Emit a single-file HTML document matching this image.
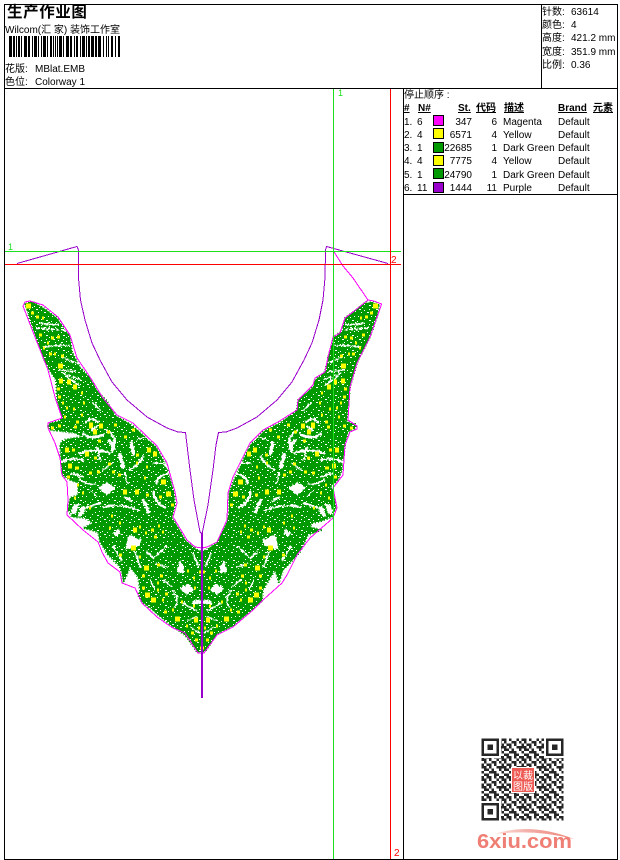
<!DOCTYPE html>
<html lang="zh">
<head>
<meta charset="utf-8">
<title>生产作业图</title>
<style>
html,body{margin:0;padding:0;background:#fff;width:620px;height:860px;overflow:hidden}
svg{display:block}
text{font-family:"Liberation Sans","Noto Sans CJK SC",sans-serif;font-size:10px;fill:#000}
.b{font-weight:bold}
.u{text-decoration:underline}
.r{text-anchor:end}
</style>
</head>
<body>
<svg width="620" height="860" viewBox="0 0 620 860" xmlns="http://www.w3.org/2000/svg">
<defs>
<pattern id="sp" width="17" height="15" patternUnits="userSpaceOnUse">
<path shape-rendering="crispEdges" fill="#fff" d="M1 1h1v1h-1zM10 2h1v1h-1zM14 1h1v1h-1zM7 4h1v1h-1zM12 5h2v1h-2zM0 6h1v1h-1zM5 7h1v1h-1zM15 7h1v1h-1zM2 9h2v1h-2zM12 9h1v1h-1zM7 10h1v1h-1zM4 12h1v1h-1zM10 12h2v1h-2zM15 11h1v1h-1z"/>
</pattern>
<pattern id="qr" width="20" height="20" patternUnits="userSpaceOnUse" x="481.5" y="738.5">
<g transform="scale(2.5)"><path stroke="#262626" stroke-width="1" fill="none" d="M0 .5h2M3 .5h1M6 .5h1M1 1.5h1M4 1.5h2M7 1.5h1M0 2.5h1M2 2.5h2M5 2.5h1M0 3.5h2M3 3.5h1M6 3.5h2M1 4.5h2M4 4.5h1M7 4.5h1M0 5.5h1M3 5.5h3M1 6.5h2M5 6.5h2M0 7.5h1M2 7.5h2M5 7.5h1M7 7.5h1"/></g>
</pattern>
<filter id="bl" x="-5%" y="-5%" width="110%" height="110%"><feGaussianBlur stdDeviation=".3"/></filter>
<filter id="rough" filterUnits="userSpaceOnUse" x="0" y="280" width="404" height="390">
 <feTurbulence type="fractalNoise" baseFrequency=".45" numOctaves="2" seed="7"/>
 <feDisplacementMap in="SourceGraphic" scale="4" xChannelSelector="R" yChannelSelector="G"/>
</filter>
<linearGradient id="sw" x1="0" x2="1" y1="0" y2="0"><stop offset="0" stop-color="#fbdcd8"/><stop offset=".5" stop-color="#f2a8a1"/><stop offset="1" stop-color="#ef8278"/></linearGradient>

<g id="detail">
 <g filter="url(#rough)">
 <g transform="translate(40 420) scale(.33333)" fill="#fff" stroke="#fff" stroke-linecap="round" stroke-linejoin="round">
  <path stroke="none" d="M175 205L200 185L226 205L200 226ZM255 392L265 345L305 360L300 375L272 385ZM420 505L445 490L462 510L440 525ZM218 340L235 325L241 340L225 352ZM410 455L420 420L432 440L430 460ZM90 285L100 255L118 250L108 280ZM125 258L140 262L128 285L112 290Z"/>
  <g fill="none" stroke-width="9">
   <path d="M120 100Q170 82 210 100" stroke-width="7"/>
   <path d="M62 125Q110 110 130 122" stroke-width="6"/>
   <path d="M172 82L180 118" stroke-width="6"/>
   <path d="M240 105L250 140" stroke-width="12"/>
   <path d="M275 70L280 100" stroke-width="11"/>
   <path d="M208 62Q226 80 216 95" stroke-width="10"/>
   <path d="M130 42Q160 62 190 42" stroke-width="8"/>
   <path d="M190 262Q240 248 300 272" stroke-width="5"/>
   <path d="M310 240L325 275" stroke-width="10"/>
   <path d="M340 215Q345 250 375 262" stroke-width="7"/>
   <path d="M350 190Q350 170 385 160" stroke-width="6"/>
   <path d="M255 160L262 190" stroke-width="6"/>
   <path d="M270 150Q300 130 310 110" stroke-width="6"/>
   <path d="M120 180Q160 202 168 190" stroke-width="6"/>
   <path d="M180 250L140 262" stroke-width="6"/>
   <path d="M350 405L380 380" stroke-width="5"/>
   <path d="M340 415L320 395" stroke-width="5"/>
   <path d="M380 442L350 430" stroke-width="5"/>
   <path d="M400 512Q420 540 405 560" stroke-width="5"/>
   <path d="M430 550L470 572" stroke-width="5"/>
   <path d="M460 400L475 440" stroke-width="5"/>
   <path d="M470 545L510 548" stroke-width="10"/>
   <path d="M285 395L300 440" stroke-width="5"/>
   <path d="M220 380L245 420" stroke-width="5"/>
   <path d="M95 160L130 170" stroke-width="5"/>
   <path d="M450 620L480 640" stroke-width="4"/>
   <path d="M340 130Q375 125 385 145" stroke-width="5"/>
   <path d="M190 150L215 130" stroke-width="4"/>
   <path d="M290 60Q315 45 335 65" stroke-width="4"/>
   <path d="M255 230L275 245" stroke-width="5"/>
   <path d="M150 210L170 230" stroke-width="4"/>
   <path d="M370 480L395 500" stroke-width="4"/>
   <path d="M330 480L345 510" stroke-width="4"/>
   <path d="M445 600L470 590" stroke-width="4"/>
  </g>
 </g>
 <g transform="translate(0 230) scale(.33333)" fill="none" stroke="#fff" stroke-linecap="square">
  <path stroke-width="5" stroke-dasharray="8 7" d="M110 295L195 300M120 280L175 285M185 382L238 402M190 430L245 450M180 420L225 425M130 350L205 345"/>
  <path stroke-width="6" d="M280 520L300 540M255 578Q270 558 292 575M320 600Q352 620 342 650M200 440L235 465M290 590L275 600"/>
 </g>
 </g>
 <path fill="none" stroke="#ff0" stroke-width="3" shape-rendering="crispEdges" d="M31 313h3M36 317h3M42 318h2M39 335h3M51 338h3M57 337h3M47 343h2M43 348h2M49 354h3M54 354h2M61 356h3M57 389h3M81 393h2M58 397h3M62 403h2M66 408h2M83 403h2M73 409h2M81 415h2M76 422h3M64 417h2M58 426h3M51 428h3M74 427h3M89 427h3M107 432h3M114 425h3M132 430h3M124 437h3M98 441h3M72 450h3M94 458h3M75 468h4M67 477h3M77 485h2M89 473h3M97 472h3M112 472h3M118 475h3M108 464h3M136 455h3M136 463h2M146 467h2M159 497h3M171 505h3M146 495h3M144 478h2M114 425h3M82 493h2M74 498h2M89 508h2M111 516h2M119 523h2M109 528h2M139 527h2M151 530h3M158 526h2M162 532h2M154 537h3M145 533h2M119 555h3M139 557h2M157 565h3M160 576h3M142 576h3M157 583h2M142 588h3M165 594h3M157 590h2M162 600h2M164 612h3M172 610h2M181 602h2M187 571h2M193 578h2M199 572h2M194 588h2M191 633h3M195 640h3M200 648h2M193 606h2M186 626h2M198 628h2"/>
 <path fill="none" stroke="#ff0" stroke-width="5" shape-rendering="crispEdges" d="M26 306h5M58 366h5M59 381h4M67 382h4M73 387h4M65 450h4M68 466h4M161 482h5M166 494h5M131 548h5M144 568h5M145 595h5M151 600h5M175 619h5M135 492h4M123 492h4M93 432h4M99 426h4M89 425h4M153 454h4M147 450h4M133 530h4M85 454h4M194 620h4"/>
</g>
</defs>

<rect width="620" height="860" fill="#fff"/>

<g shape-rendering="crispEdges">
 <path fill="#090" stroke="#090" stroke-width="2" stroke-dasharray="1 2" d="M25 304L27 302L33 302L45 309L57 318L65 330L70 336L72 352L80 367L90 378L98 392L106 400L116 416L132 425L143 435L156 447L166 465L174 492L175 505L172 517L186 541L196 549L202 552L202 652L197 652L185 635L173 627L157 614L150 608L142 602L138 595L140 590L138 577L130 567L127 575L123 583L122 573L120 567L108 555L100 542L98 532L83 528L93 523L85 518L72 517L68 510L70 498L72 497L78 495L78 483L70 480L62 475L61 460L60 445L63 440L73 438L83 437L75 433L50 430L48 426L50 423L60 421L62 417L57 400L56 380L48 368L46 364L35 335Z"/>
 <path fill="#090" stroke="#090" stroke-width="2" stroke-dasharray="1 2" d="M379 305L372 302L365 303L356 310L345 318L342 330L334 337L328 358L325 372L315 380L313 387L298 400L297 410L280 423L265 430L250 445L235 478L229 493L229 510L227 522L217 543L207 549L202 552L202 652L205 652L217 634L233 626L253 609L262 601L263 590L275 570L279 583L283 570L290 563L300 552L308 535L322 530L310 527L312 523L322 521L332 517L336 508L333 490L330 487L338 480L342 470L345 445L348 432L356 428L355 424L345 421L347 420L350 387L357 363L370 337L377 317Z"/>
 <path fill="url(#sp)" d="M25 304L27 302L33 302L45 309L57 318L65 330L70 336L72 352L80 367L90 378L98 392L106 400L116 416L132 425L143 435L156 447L166 465L174 492L175 505L172 517L186 541L196 549L202 552L202 652L197 652L185 635L173 627L157 614L150 608L142 602L138 595L140 590L138 577L130 567L127 575L123 583L122 573L120 567L108 555L100 542L98 532L83 528L93 523L85 518L72 517L68 510L70 498L72 497L78 495L78 483L70 480L62 475L61 460L60 445L63 440L73 438L83 437L75 433L50 430L48 426L50 423L60 421L62 417L57 400L56 380L48 368L46 364L35 335Z"/>
 <path fill="url(#sp)" d="M379 305L372 302L365 303L356 310L345 318L342 330L334 337L328 358L325 372L315 380L313 387L298 400L297 410L280 423L265 430L250 445L235 478L229 493L229 510L227 522L217 543L207 549L202 552L202 652L205 652L217 634L233 626L253 609L262 601L263 590L275 570L279 583L283 570L290 563L300 552L308 535L322 530L310 527L312 523L322 521L332 517L336 508L333 490L330 487L338 480L342 470L345 445L348 432L356 428L355 424L345 421L347 420L350 387L357 363L370 337L377 317Z"/>
 <use href="#detail"/>
 <use href="#detail" transform="matrix(-1 0 0 1 404 0)"/>

 <path fill="none" stroke="#f0f" stroke-width="1" d="M333.5 251L343 266L353 278L368 300L374 301L381.5 304L380 309L377 317L370 337L357 363L350 387L348 420L357 426L357 429L350 432L345 445L343 475L333 488L337 508L333 518L310 538L297 555L287 575L282 583L263 600L253 610L233 627L217 635L204 653L198 653L185 633L173 628L157 617L142 603L135 588L122 583L120 572L108 563L102 552L98 542L83 530L67 515L68 500L67 482L62 475L60 458L55 443L48 428L48 423L62 418L55 397L48 370L35 337L23 306L25 302L30 301L43 305L58 317L70 335L77 358L90 377L103 398L117 415L133 423L157 446L167 463L175 492L177 503L173 517L187 540L195 547L202 548L207 547L217 542L227 520L228 493L233 477L250 443L263 430L278 422L297 410L298 400L313 385L315 378L325 372L328 357L333 337L340 333L345 318L353 312L368 300"/>
 <path fill="none" stroke="#90c" stroke-width="1" d="M17 263.5L77 246.5L78.5 250L78.5 278L80.5 300L85 320L92 343L100 360L112 382L127 400L147 417L167 428L178 432L185.5 432.5L187 445L190 470L194 500L200 532L202 534L208 505L213 470L216 445L218.5 432.5L226 432L237 428L257 417L277 400L292 382L304 360L312 343L319 320L323 300L325 278L325.5 250L326.5 246.5L388 263.5"/>
 <rect x="201" y="533" width="2" height="165" fill="#90c"/>
 <rect x="333" y="88" width="1" height="771" fill="#1ce01c"/>
 <rect x="4" y="251" width="397" height="1" fill="#1ce01c"/>
 <rect x="4" y="264" width="397" height="1" fill="#f00"/>
 <rect x="390" y="88" width="1" height="771" fill="#f00"/>
 <path fill="none" stroke="#000" stroke-width="1" d="M4.5 4.5H617.5V859.5H4.5ZM4.5 88.5H617.5M541.5 4.5V88.5M403.5 88.5V859.5M403.5 194.5H617.5"/>
 <path fill="#000" d="M9 36h3v21h-3zM13 36h2v21h-2zM16 36h1v21h-1zM18 36h2v21h-2zM21 36h1v21h-1zM24 36h3v21h-3zM28 36h2v21h-2zM32 36h1v21h-1zM34 36h3v21h-3zM38 36h1v21h-1zM41 36h1v21h-1zM43 36h3v21h-3zM47 36h1v21h-1zM50 36h2v21h-2zM53 36h1v21h-1zM55 36h1v21h-1zM57 36h1v21h-1zM59 36h3v21h-3zM63 36h1v21h-1zM66 36h3v21h-3zM70 36h2v21h-2zM74 36h1v21h-1zM76 36h2v21h-2zM80 36h1v21h-1zM82 36h3v21h-3zM86 36h1v21h-1zM88 36h2v21h-2zM91 36h3v21h-3zM95 36h2v21h-2zM98 36h3v21h-3zM103 36h1v21h-1zM106 36h1v21h-1zM108 36h1v21h-1zM111 36h2v21h-2zM115 36h1v21h-1zM118 36h2v21h-2z"/>
</g>

<g stroke="#000" stroke-width="1" shape-rendering="crispEdges">
 <rect x="433.5" y="115.5" width="10" height="10" fill="#f0f"/>
 <rect x="433.5" y="128.5" width="10" height="10" fill="#ff0"/>
 <rect x="433.5" y="142.5" width="10" height="10" fill="#090"/>
 <rect x="433.5" y="155.5" width="10" height="10" fill="#ff0"/>
 <rect x="433.5" y="168.5" width="10" height="10" fill="#090"/>
 <rect x="433.5" y="182.5" width="10" height="10" fill="#90c"/>
</g>

<text x="7" y="17" class="b" style="font-size:15.5px;letter-spacing:.6px">生产作业图</text>
<text x="5" y="33" style="font-size:10px">Wilcom(汇 家) 装饰工作室</text>
<text x="5" y="72">花版:</text><text x="35" y="72">MBlat.EMB</text>
<text x="5" y="85">色位:</text><text x="35" y="85">Colorway 1</text>

<text x="542" y="15">针数:</text><text x="571" y="15">63614</text>
<text x="542" y="28">颜色:</text><text x="571" y="28">4</text>
<text x="542" y="41">高度:</text><text x="571" y="41">421.2 mm</text>
<text x="542" y="55">宽度:</text><text x="571" y="55">351.9 mm</text>
<text x="542" y="68">比例:</text><text x="571" y="68">0.36</text>

<text x="8" y="250" style="font-size:9px;fill:#1ce01c">1</text>
<text x="338" y="96" style="font-size:9px;fill:#1ce01c">1</text>
<text x="391" y="263" style="font-size:10px;fill:#f00">2</text>
<text x="394" y="856" style="font-size:10px;fill:#f00">2</text>

<text x="404" y="98">停止顺序 :</text>
<text x="404" y="111" class="b u">#</text>
<text x="418" y="111" class="b u">N#</text>
<text x="458" y="111" class="b u">St.</text>
<text x="476" y="111" class="b u">代码</text>
<text x="504" y="111" class="b u">描述</text>
<text x="558" y="111" class="b u">Brand</text>
<text x="593" y="111" class="b u">元素</text>
<text x="404" y="125">1.</text><text x="417" y="125">6</text><text x="472" y="125" class="r">347</text><text x="497" y="125" class="r">6</text><text x="503" y="125">Magenta</text><text x="558" y="125">Default</text>
<text x="404" y="138">2.</text><text x="417" y="138">4</text><text x="472" y="138" class="r">6571</text><text x="497" y="138" class="r">4</text><text x="503" y="138">Yellow</text><text x="558" y="138">Default</text>
<text x="404" y="151">3.</text><text x="417" y="151">1</text><text x="472" y="151" class="r">22685</text><text x="497" y="151" class="r">1</text><text x="503" y="151">Dark Green</text><text x="558" y="151">Default</text>
<text x="404" y="164">4.</text><text x="417" y="164">4</text><text x="472" y="164" class="r">7775</text><text x="497" y="164" class="r">4</text><text x="503" y="164">Yellow</text><text x="558" y="164">Default</text>
<text x="404" y="178">5.</text><text x="417" y="178">1</text><text x="472" y="178" class="r">24790</text><text x="497" y="178" class="r">1</text><text x="503" y="178">Dark Green</text><text x="558" y="178">Default</text>
<text x="404" y="191">6.</text><text x="417" y="191">11</text><text x="472" y="191" class="r">1444</text><text x="497" y="191" class="r">11</text><text x="503" y="191">Purple</text><text x="558" y="191">Default</text>

<g filter="url(#bl)">
 <rect x="481.5" y="738.5" width="82" height="82" fill="url(#qr)"/>
 <g fill="#fff">
  <rect x="481" y="738" width="20" height="20"/>
  <rect x="544" y="738" width="20" height="20"/>
  <rect x="481" y="801" width="20" height="20"/>
 </g>
 <g fill="none" stroke="#262626" stroke-width="2.5">
  <rect x="482.75" y="739.75" width="15" height="15"/>
  <rect x="547.25" y="739.75" width="15" height="15"/>
  <rect x="482.75" y="804.25" width="15" height="15"/>
 </g>
 <g fill="#262626">
  <rect x="487.5" y="744.5" width="5.5" height="5.5"/>
  <rect x="552" y="744.5" width="5.5" height="5.5"/>
  <rect x="487.5" y="809" width="5.5" height="5.5"/>
 </g>
</g>
<rect x="511" y="767" width="24" height="26" fill="#fff"/>
<rect x="512" y="768" width="22" height="24" fill="#ee5a54"/>
<text x="513" y="779" style="font-size:10px;fill:#fff">以</text>
<text x="523" y="779" style="font-size:10px;fill:#fff">裁</text>
<text x="513" y="790" style="font-size:10px;fill:#fff">图</text>
<text x="523" y="790" style="font-size:10px;fill:#fff">版</text>

<path d="M495 834Q530 822 574 839Q535 829 495 834Z" fill="url(#sw)"/>
<text x="477" y="848" class="b" textLength="95" lengthAdjust="spacingAndGlyphs" style="font-size:20px;fill:#ef7f75">6xiu.com</text>
</svg>
</body>
</html>
